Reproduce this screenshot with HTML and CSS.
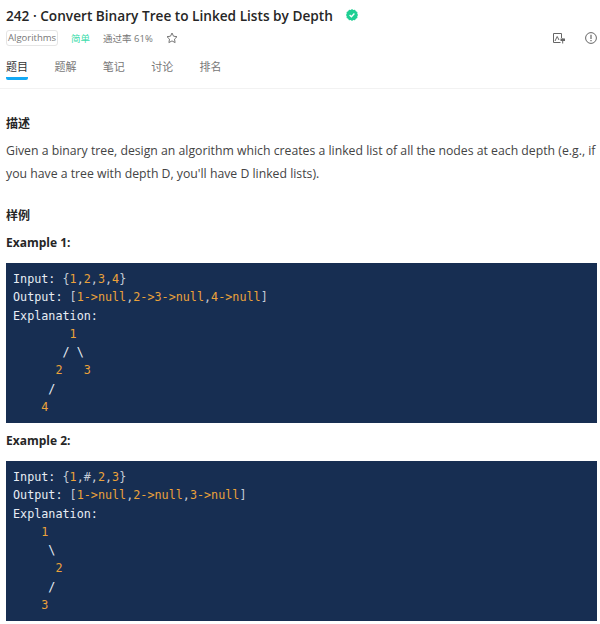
FILE: index.html
```html
<!DOCTYPE html>
<html lang="en">
<head>
    <meta charset="UTF-8">
    <meta name="viewport" content="width=device-width, initial-scale=1.0">
    <title>242 · Convert Binary Tree to Linked Lists by Depth</title>
    <link rel="stylesheet" href="styles.css">
</head>
<body>
    <div class="header">
        <div class="title-row">
            <h1>242 · Convert Binary Tree to Linked Lists by Depth</h1>
            <svg class="solved" width="12" height="12" viewBox="0 0 12 12">
                <path d="M6 0 L7.3 .9 L9 .8 L9.9 2.2 L11.4 3 L11.3 4.7 L12 6 L11.3 7.3 L11.4 9 L9.9 9.8 L9 11.2 L7.3 11.1 L6 12 L4.7 11.1 L3 11.2 L2.1 9.8 L.6 9 L.7 7.3 L0 6 L.7 4.7 L.6 3 L2.1 2.2 L3 .8 L4.7 .9 Z" fill="#1fcf93"/>
                <path d="M3.6 6 L5.4 7.8 L8.4 4.5" fill="none" stroke="#fff" stroke-width="1.3"/>
            </svg>
        </div>
        <div class="meta-row">
            <span class="tag">Algorithms</span>
            <span class="level">简单</span>
            <span class="rate">通过率 61%</span>
            <svg class="star" width="12" height="12" viewBox="0 0 12 12">
                <path d="M6 1 L7.5 4.2 L11 4.7 L8.5 7.1 L9.1 10.6 L6 8.9 L2.9 10.6 L3.5 7.1 L1 4.7 L4.5 4.2 Z" fill="none" stroke="#777" stroke-width="1"/>
            </svg>
            <div class="meta-icons">
                <svg width="12" height="11" viewBox="0 0 12 11">
                    <path d="M7.5 9.5 H.5 V.5 H8.5 V5" fill="none" stroke="#666" stroke-width="1"/>
                    <path d="M2 8 L4.2 3.5 L6 7" fill="none" stroke="#666" stroke-width="1"/>
                    <rect x="7.5" y="5.5" width="4.5" height="2.5" fill="#666"/>
                    <path d="M9.7 5.5 V10.5" stroke="#666" stroke-width="1"/>
                </svg>
                <svg width="12" height="12" viewBox="0 0 12 12">
                    <circle cx="6" cy="6" r="5.4" fill="none" stroke="#666" stroke-width="1"/>
                    <path d="M6 2.8 V7" stroke="#666" stroke-width="1.2"/>
                    <path d="M6 8 V9.2" stroke="#666" stroke-width="1.2"/>
                </svg>
            </div>
        </div>
        <div class="tabs">
            <a class="tab active">题目</a>
            <a class="tab">题解</a>
            <a class="tab">笔记</a>
            <a class="tab">讨论</a>
            <a class="tab">排名</a>
        </div>
    </div>

    <div class="content">
        <h2>描述</h2>
        <p>Given a binary tree, design an algorithm which creates a linked list of all the nodes at each depth (e.g., if you have a tree with depth D, you'll have D linked lists).</p>
        <h2 class="section-gap">样例</h2>
        <h3>Example 1:</h3>
        <div class="code">
            <div class="line">Input: <span class="p">{</span><span class="n">1</span><span class="p">,</span><span class="n">2</span><span class="p">,</span><span class="n">3</span><span class="p">,</span><span class="n">4</span><span class="p">}</span></div>
            <div class="line">Output: <span class="p">[</span><span class="n">1-&gt;null</span><span class="p">,</span><span class="n">2-&gt;3-&gt;null</span><span class="p">,</span><span class="n">4-&gt;null</span><span class="p">]</span></div>
            <div class="line">Explanation:</div>
            <div class="line">        <span class="n">1</span></div>
            <div class="line">       / \</div>
            <div class="line">      <span class="n">2</span>   <span class="n">3</span></div>
            <div class="line">     /</div>
            <div class="line">    <span class="n">4</span></div>
        </div>
        <h3>Example 2:</h3>
        <div class="code">
            <div class="line">Input: <span class="p">{</span><span class="n">1</span><span class="p">,#,</span><span class="n">2</span><span class="p">,</span><span class="n">3</span><span class="p">}</span></div>
            <div class="line">Output: <span class="p">[</span><span class="n">1-&gt;null</span><span class="p">,</span><span class="n">2-&gt;null</span><span class="p">,</span><span class="n">3-&gt;null</span><span class="p">]</span></div>
            <div class="line">Explanation:</div>
            <div class="line">    <span class="n">1</span></div>
            <div class="line">     \</div>
            <div class="line">      <span class="n">2</span></div>
            <div class="line">     /</div>
            <div class="line">    <span class="n">3</span></div>
        </div>
    </div>
</body>
</html>
```

FILE: styles.css
```css
body {
    font-family: "Open Sans", "Noto Sans CJK SC", sans-serif;
    margin: 0;
    background-color: white;
    color: #333;
    overflow: hidden;
}

.header {
    padding: 0 3px 0 6px;
    height: 88px;
    border-bottom: 1px solid #f2f2f2;
}

.title-row {
    display: flex;
    align-items: center;
    height: 30px;
}

.title-row h1 {
    margin: 0;
    font-size: 13.65px;
    font-weight: 600;
    color: #262626;
}

.solved {
    margin-left: 13px;
}

.meta-row {
    display: flex;
    align-items: center;
    height: 16px;
    font-size: 9.5px;
    color: #777;
}

.tag {
    border: 1px solid #e5e5e5;
    border-radius: 3px;
    padding: 0 1px;
    height: 14px;
    line-height: 14px;
    color: #777;
}

.level {
    margin-left: 13px;
    color: #3ddcab;
}

.rate {
    margin-left: 13px;
}

.star {
    margin-left: 13px;
}

.meta-icons {
    margin-left: auto;
    display: flex;
    align-items: center;
    gap: 20px;
}

.tabs {
    display: flex;
    gap: 26.4px;
    margin-top: 12px;
}

.tab {
    font-size: 11px;
    color: #777;
    height: 22px;
    line-height: 18px;
    box-sizing: border-box;
}

.tab.active {
    color: #333;
    border-bottom: 3px solid #12a9f5;
    border-radius: 2px;
}

.content {
    padding: 26px 3px 0 6px;
}

.content h2 {
    margin: 0;
    font-size: 12px;
    line-height: 18px;
    font-weight: 700;
    color: #262626;
}

.content h2.section-gap {
    margin-top: 22px;
}

.content p {
    margin: 6px 0 0;
    font-size: 12.25px;
    line-height: 23px;
    color: #444;
}

.content h3 {
    margin: 9px 0 0;
    font-size: 12px;
    line-height: 18px;
    font-weight: 700;
    color: #262626;
}

.code {
    margin: 11px 0 0;
    height: 160px;
    box-sizing: border-box;
    padding: 7px 7px;
    background-color: #172e52;
    color: #e8edf4;
    font-family: "DejaVu Sans Mono", monospace;
    font-size: 11.75px;
    line-height: 18.3px;
}

.code .line {
    white-space: pre;
}

.code .n {
    color: #eba23a;
}

.code .p {
    color: #c3cbd6;
}
```
